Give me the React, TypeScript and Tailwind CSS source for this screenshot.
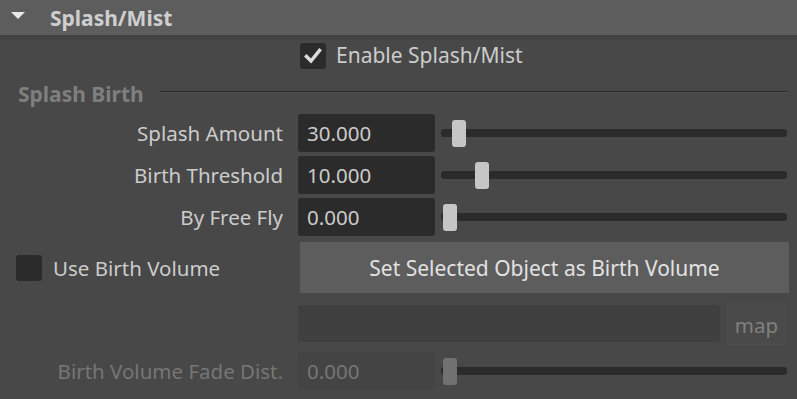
import React from "react";

const font = { fontFamily: '"Noto Sans", "Open Sans", sans-serif' };

function Slider({ pos, disabled }: { pos: number; disabled?: boolean }) {
  return (
    <div className="relative ml-[6px] h-[8px] w-[346px] rounded-[3px] bg-[#2b2b2b]">
      <div
        className={
          "absolute top-[-9px] h-[27px] w-[14px] rounded-[3px] " +
          (disabled ? "bg-[#717171]" : "bg-[#c6c6c6]")
        }
        style={{ left: pos }}
      />
    </div>
  );
}

function Row({ label, value, pos, disabled }: { label: string; value: string; pos: number; disabled?: boolean }) {
  return (
    <div className="flex h-[38px] items-center">
      <div
        className={
          "w-[283px] whitespace-nowrap text-right text-[20.5px] " +
          (disabled ? "text-[#767676]" : "text-[#cccccc]")
        }
      >
        {label}
      </div>
      <div
        className={
          "ml-[15px] flex h-[38px] w-[137px] items-center rounded-[3px] pl-[9px] text-[20.5px] " +
          (disabled ? "bg-[#444444] text-[#767676]" : "bg-[#2b2b2b] text-[#cccccc]")
        }
      >
        {value}
      </div>
      <Slider pos={pos} disabled={disabled} />
    </div>
  );
}

export default function App() {
  return (
    <div className="h-[399px] w-[797px] overflow-hidden bg-[#484848]" style={font}>
      {/* header */}
      <div className="flex h-[35px] items-center bg-[#5d5d5d]">
        <svg width="14" height="8" viewBox="0 0 14 8" className="ml-[11px] mb-[4px]">
          <polygon points="0,0 14,0 7,7" fill="#e8e8e8" />
        </svg>
        <span className="ml-[25px] mt-[2px] text-[21px] font-bold text-[#cfcfcf]">Splash/Mist</span>
      </div>
      <div className="h-[5px] bg-[#434343]" />

      {/* enable */}
      <div className="mt-[3px] flex h-[26px] items-center pl-[300px]">
        <div className="flex h-[26px] w-[26px] items-center justify-center rounded-[3px] bg-[#2b2b2b]">
          <svg width="18" height="16" viewBox="0 0 18 16">
            <polyline points="2.5,8.5 7,13 15.5,2.5" fill="none" stroke="#dcdcdc" strokeWidth="3.5" strokeLinecap="square" />
          </svg>
        </div>
        <span className="ml-[10px] text-[21px] text-[#cccccc]">Enable Splash/Mist</span>
      </div>

      {/* section title */}
      <div className="mt-[13px] flex h-[26px] items-center">
        <span className="ml-[18px] text-[21px] font-bold text-[#7f7f7f]">Splash Birth</span>
        <div className="ml-[16px] mr-[9px] mb-[6px] flex-1 border-t border-b border-t-[#2a2a2a] border-b-[#525252]" />
      </div>

      <div className="mt-[6px] flex flex-col gap-[4px]">
        <Row label="Splash Amount" value="30.000" pos={11} />
        <Row label="Birth Threshold" value="10.000" pos={34} />
        <Row label="By Free Fly" value="0.000" pos={2} />
      </div>

      {/* birth volume */}
      <div className="mt-[6px] flex h-[51px] items-center">
        <div className="ml-[16px] h-[26px] w-[26px] rounded-[3px] bg-[#2b2b2b]" />
        <span className="ml-[11px] w-[247px] pt-[2px] text-[20.5px] text-[#cccccc]">Use Birth Volume</span>
        <div className="flex h-[51px] w-[489px] items-center justify-center bg-[#5d5d5d] pt-[3px] text-[21px] text-[#e2e2e2]">
          Set Selected Object as Birth Volume
        </div>
      </div>

      <div className="mt-[6px] flex h-[49px] items-center">
        <div className="ml-[298px] h-[37px] w-[422px] rounded-[3px] bg-[#404040]" />
        <div className="ml-[5px] flex h-[49px] w-[63px] items-center justify-center border border-[#444444] bg-[#4a4a4a] pt-[3px] text-[20.5px] text-[#808080]">
          map
        </div>
      </div>

      <div className="mt-[4px]">
        <Row label="Birth Volume Fade Dist." value="0.000" pos={2} disabled />
      </div>
    </div>
  );
}
